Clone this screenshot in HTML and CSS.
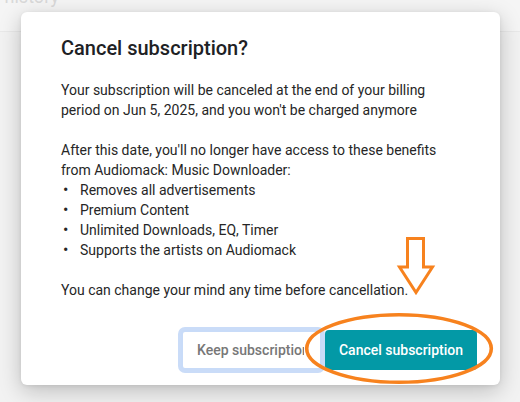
FILE: index.html
```html
<!DOCTYPE html>
<html>
<head>
<meta charset="utf-8">
<link rel="stylesheet" href="styles.css">
</head>
<body>
<div class="page">
  <header class="page-head"><span class="page-title">Order history</span></header>
  <div class="page-body"></div>
</div>
<div class="modal">
  <h1 class="modal-title">Cancel subscription?</h1>
  <div class="modal-text">
    <p>Your subscription will be canceled at the end of your billing period on Jun 5, 2025, and you won't be charged anymore</p>
    <p class="lead">After this date, you'll no longer have access to these benefits from Audiomack: Music Downloader:</p>
    <ul class="benefits">
      <li><span class="dot">•</span><span>Removes all advertisements</span></li>
      <li><span class="dot">•</span><span>Premium Content</span></li>
      <li><span class="dot">•</span><span>Unlimited Downloads, EQ, Timer</span></li>
      <li><span class="dot">•</span><span>Supports the artists on Audiomack</span></li>
    </ul>
    <p>You can change your mind any time before cancellation.</p>
  </div>
  <div class="actions">
    <button class="btn btn-keep"><span class="btn-clip">Keep subscription</span></button>
    <button class="btn btn-cancel">Cancel subscription</button>
  </div>
</div>
<svg class="annot" width="520" height="402" viewBox="0 0 520 402">
  <path d="M407.5,238.5 H423.5 V267 H432.5 L416,292.5 L399.5,267 H407.5 Z" fill="none" stroke="#f7821e" stroke-width="3" stroke-linejoin="miter"/>
  <ellipse cx="399" cy="348.5" rx="92.3" ry="33.8" fill="none" stroke="#f7821e" stroke-width="3.6"/>
</svg>
</body>
</html>
```
FILE: styles.css
```css
* { box-sizing: border-box; }
html, body { margin: 0; padding: 0; }
body {
  width: 520px;
  height: 402px;
  overflow: hidden;
  background: #f2f2f2;
  font-family: Roboto, "Noto Sans", Arial, sans-serif;
  position: relative;
}
.page-head {
  height: 32px;
  border-bottom: 1px solid #e9e9e9;
  background: #f5f5f5;
  overflow: hidden;
}
.page-title {
  display: block;
  margin-top: -14px;
  margin-left: -44px;
  font-size: 18px;
  line-height: 22px;
  color: #d9d9d9;
}
.modal {
  position: absolute;
  left: 21px;
  top: 12px;
  width: 479px;
  height: 373px;
  background: #fff;
  border-radius: 6px;
  box-shadow: 0 6px 22px rgba(0,0,0,0.22), 0 1px 4px rgba(0,0,0,0.08);
  padding: 24px 23px 0 40px;
}
.modal-title {
  margin: 0;
  font-size: 20px;
  line-height: 24px;
  font-weight: 500;
  color: #202124;
}
.modal-text {
  margin-top: 20px;
  padding-right: 17px;
  font-size: 14px;
  line-height: 20px;
  color: #262626;
}
.modal-text p { margin: 0 0 20px; }
.modal-text p.lead { margin-bottom: 0; }
.modal-text p:last-child { margin-bottom: 0; }
.benefits {
  list-style: none;
  margin: 0 0 20px;
  padding: 0;
}
.benefits li { display: flex; }
.dot { width: 19px; padding-left: 2px; flex: none; font-size: 16px; }
.actions {
  display: flex;
  justify-content: flex-end;
  gap: 3px;
  margin-top: 30px;
}
.btn {
  height: 40px;
  border-radius: 4px;
  font-family: inherit;
  font-size: 14px;
  font-weight: 500;
  padding: 0;
  cursor: pointer;
  white-space: nowrap;
}
.btn-keep {
  width: 141px;
  background: #fff;
  border: 2px solid #c8dbf8;
  box-shadow: 0 0 0 3px #cadcf8;
  color: #777;
  padding-left: 14px;
  text-align: left;
}
.btn-clip {
  display: block;
  width: 107px;
  overflow: hidden;
}
.btn-cancel {
  width: 152px;
  background: #0399a6;
  border: none;
  color: #fff;
  position: relative;
}
.annot {
  position: absolute;
  left: 0;
  top: 0;
  pointer-events: none;
}
```
